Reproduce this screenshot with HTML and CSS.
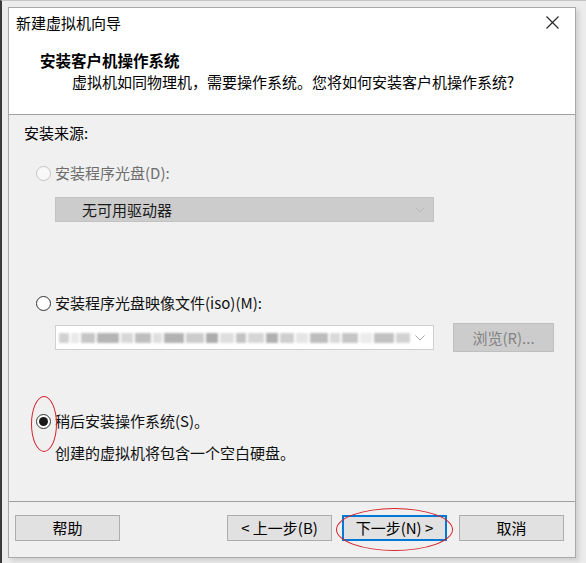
FILE: index.html
```html
<!DOCTYPE html>
<html lang="zh-CN">
<head>
<meta charset="utf-8">
<title>新建虚拟机向导</title>
<link rel="stylesheet" href="styles.css">
</head>
<body>
<div class="screen">
  <div class="dialog">
    <div class="titlebar">
      <span class="title">新建虚拟机向导</span>
      <svg class="close" width="13" height="13" viewBox="0 0 13 13"><path d="M0.5 0.5 L12.5 12.5 M12.5 0.5 L0.5 12.5" stroke="#222" stroke-width="1.1" fill="none"/></svg>
    </div>
    <div class="header">
      <div class="h-title">安装客户机操作系统</div>
      <div class="h-sub">虚拟机如同物理机，需要操作系统。您将如何安装客户机操作系统?</div>
    </div>
    <div class="content">
      <div class="label">安装来源:</div>
      <div class="radio-row r1 disabled"><span class="radio"></span><span>安装程序光盘(D):</span></div>
      <div class="select disabled-select">
        <span class="sel-text">无可用驱动器</span>
        <svg class="chev" width="10" height="6" viewBox="0 0 10 6"><path d="M0.5 0.5 L5 5 L9.5 0.5" stroke="#b8b8b8" fill="none"/></svg>
      </div>
      <div class="radio-row r2"><span class="radio"></span><span>安装程序光盘映像文件(iso)(M):</span></div>
      <div class="iso-row">
        <div class="select iso-select">
          <div class="blur">
            <span style="width:10px;background:#c9c9c9"></span>
            <span style="width:8px;background:#e6e6e6"></span>
            <span style="width:14px;background:#bdbdbd"></span>
            <span style="width:22px;background:#a9a9a9"></span>
            <span style="width:12px;background:#d2d2d2"></span>
            <span style="width:16px;background:#b4b4b4"></span>
            <span style="width:9px;background:#dadada"></span>
            <span style="width:20px;background:#a6a6a6"></span>
            <span style="width:18px;background:#c4c4c4"></span>
            <span style="width:12px;background:#9e9e9e"></span>
            <span style="width:14px;background:#d9d9d9"></span>
            <span style="width:10px;background:#b9b9b9"></span>
            <span style="width:16px;background:#cfcfcf"></span>
            <span style="width:12px;background:#a3a3a3"></span>
            <span style="width:14px;background:#c7c7c7"></span>
            <span style="width:12px;background:#e1e1e1"></span>
            <span style="width:18px;background:#b2b2b2"></span>
            <span style="width:10px;background:#d4d4d4"></span>
            <span style="width:16px;background:#bcbcbc"></span>
            <span style="width:12px;background:#e8e8e8"></span>
            <span style="width:20px;background:#b7b7b7"></span>
            <span style="width:14px;background:#cbcbcb"></span>
          </div>
          <svg class="chev" width="10" height="6" viewBox="0 0 10 6"><path d="M0.5 0.5 L5 5 L9.5 0.5" stroke="#a8a8a8" fill="none"/></svg>
        </div>
        <div class="btn browse">浏览(R)...</div>
      </div>
      <div class="radio-row r3"><span class="radio checked"></span><span>稍后安装操作系统(S)。</span></div>
      <div class="note">创建的虚拟机将包含一个空白硬盘。</div>
    </div>
    <div class="footer">
      <div class="btn">帮助</div>
      <div class="btn back">&lt; 上一步(B)</div>
      <div class="btn default">下一步(N) &gt;</div>
      <div class="btn cancel">取消</div>
    </div>
  </div>
  <div class="mark mark-radio"></div>
  <div class="mark mark-next"></div>
</div>
</body>
</html>
```
FILE: styles.css
```css
* { box-sizing: border-box; }
html, body { margin: 0; padding: 0; }
body {
  width: 586px;
  height: 563px;
  overflow: hidden;
  background: #ececec;
  font-family: "Noto Sans CJK SC", "Microsoft YaHei", sans-serif;
  font-size: 15px;
  color: #111;
}
.screen {
  position: relative;
  width: 586px;
  height: 563px;
  border-left: 2px solid #3a3a3a;
  border-top: 1px solid #c4c4c4;
  padding: 6px 0 0 6px;
}
.dialog {
  width: 568px;
  height: 551px;
  border: 1px solid #a9a9a9;
  background: #f0f0f0;
  display: flex;
  flex-direction: column;
  box-shadow: 3px 3px 5px rgba(0,0,0,0.12);
}
.titlebar {
  height: 29px;
  background: #fff;
  display: flex;
  align-items: center;
  padding-left: 7px;
  padding-right: 16px;
  line-height: 20px;
}
.title { flex: 1; font-size: 15px; color: #000; }
.close { display: block; }
.header {
  background: #fff;
  padding: 12px 0 21px 31px;
  border-bottom: 1px solid #a0a0a0;
  line-height: 22px;
}
.h-title { font-weight: bold; font-size: 15.5px; color: #000; }
.h-sub { padding-left: 32px; color: #000; }
.content {
  height: 387px;
  padding: 7px 0 0 15px;
  line-height: 22px;
  border-bottom: 1px solid #a0a0a0;
}
.label { color: #000; }
.radio-row {
  display: flex;
  align-items: center;
  margin-left: 12px;
  height: 22px;
}
.radio {
  width: 15px;
  height: 15px;
  border-radius: 50%;
  border: 1px solid #333;
  background: #fff;
  margin-right: 4px;
  position: relative;
  flex: none;
}
.radio.checked::after {
  content: "";
  position: absolute;
  left: 2px;
  top: 2px;
  width: 9px;
  height: 9px;
  border-radius: 50%;
  background: #1a1a1a;
}
.disabled { color: #6d6d6d; }
.disabled .radio { border-color: #c4c4c4; background: #f8f8f8; }
.r1 { margin-top: 18px; }
.select {
  margin-left: 31px;
  width: 379px;
  height: 25px;
  display: flex;
  align-items: center;
  position: relative;
}
.disabled-select {
  margin-top: 13px;
  background: #cccccc;
  border: 1px solid #c2c2c2;
  padding-left: 26px;
}
.sel-text { flex: 1; color: #1a1a1a; }
.chev { margin-right: 8px; display: block; }
.r2 { margin-top: 70px; }
.iso-row {
  margin-top: 9px;
  height: 29px;
  display: flex;
  align-items: center;
}
.iso-select {
  background: #fff;
  border: 1px solid #d0d0d0;
  padding-left: 3px;
}
.blur {
  flex: 1;
  display: flex;
  gap: 2px;
  height: 10px;
  filter: blur(1.2px);
  opacity: 0.85;
  overflow: hidden;
}
.blur span { display: block; height: 10px; flex: none; }
.btn {
  width: 105px;
  height: 26px;
  border: 1px solid #adadad;
  background: #e1e1e1;
  display: flex;
  align-items: center;
  justify-content: center;
  color: #000;
  line-height: 20px;
}
.browse {
  margin-left: 19px;
  width: 101px;
  height: 29px;
  background: #cccccc;
  border-color: #bfbfbf;
  color: #838383;
}
.r3 { margin-top: 58px; }
.note { margin-top: 10px; margin-left: 31px; }
.footer {
  flex: 1;
  display: flex;
  padding: 13px 11px 0 6px;
  align-items: flex-start;
}
.back { margin-left: auto; }
.default {
  margin-left: 10px;
  border: 2px solid #0078d7;
}
.cancel { margin-left: 12px; }
.mark {
  position: absolute;
  border: 1.6px solid #d8232a;
  border-radius: 50%;
}
.mark-radio { left: 29px; top: 395px; width: 26px; height: 56px; }
.mark-next { left: 334px; top: 507px; width: 117px; height: 43px; }
```
